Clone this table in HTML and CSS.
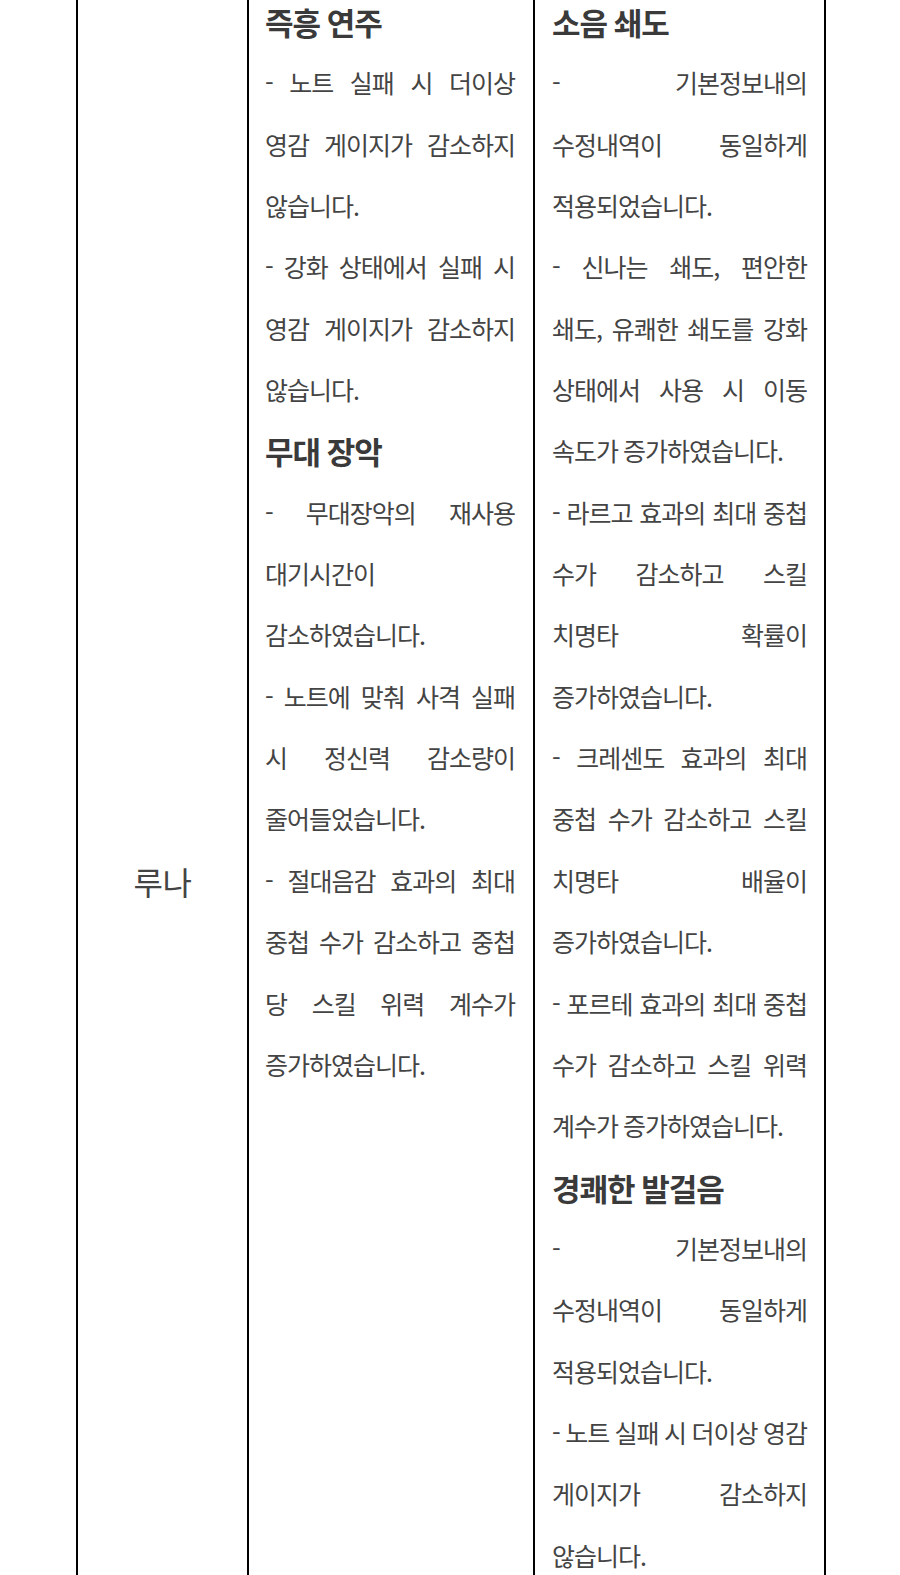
FILE: index.html
```html
<!DOCTYPE html>
<html lang="ko">
<head>
<meta charset="utf-8">
<title>루나</title>
<link rel="stylesheet" href="styles.css">
</head>
<body>
<table class="patch">
  <colgroup>
    <col class="c-name">
    <col class="c-a">
    <col class="c-b">
  </colgroup>
  <tbody>
    <tr>
      <td class="name">루나</td>
      <td class="notes notes-a">
        <p class="skill">즉흥 연주</p>
        <p>- 노트 실패 시 더이상 영감 게이지가 감소하지 않습니다.</p>
        <p>- 강화 상태에서 실패 시 영감 게이지가 감소하지 않습니다.</p>
        <p class="skill">무대 장악</p>
        <p>- 무대장악의 재사용 대기시간이 감소하였습니다.</p>
        <p>- 노트에 맞춰 사격 실패 시 정신력 감소량이 줄어들었습니다.</p>
        <p>- 절대음감 효과의 최대 중첩 수가 감소하고 중첩 당 스킬 위력 계수가 증가하였습니다.</p>
      </td>
      <td class="notes notes-b">
        <p class="skill">소음 쇄도</p>
        <p>- 기본정보내의 수정내역이 동일하게 적용되었습니다.</p>
        <p>- 신나는 쇄도, 편안한 쇄도, 유쾌한 쇄도를 강화 상태에서 사용 시 이동 속도가 증가하였습니다.</p>
        <p>- 라르고 효과의 최대 중첩 수가 감소하고 스킬 치명타 확률이 증가하였습니다.</p>
        <p>- 크레센도 효과의 최대 중첩 수가 감소하고 스킬 치명타 배율이 증가하였습니다.</p>
        <p>- 포르테 효과의 최대 중첩 수가 감소하고 스킬 위력 계수가 증가하였습니다.</p>
        <p class="skill">경쾌한 발걸음</p>
        <p>- 기본정보내의 수정내역이 동일하게 적용되었습니다.</p>
        <p>- 노트 실패 시 더이상 영감 게이지가 감소하지 않습니다.</p>
        <p>- 강화 상태에서 실패 시 영감 게이지가 감소하지 않습니다.</p>
      </td>
    </tr>
  </tbody>
</table>
</body>
</html>
```
FILE: styles.css
```css
html, body {
  margin: 0;
  padding: 0;
  background: #ffffff;
}

body {
  font-family: "Noto Sans CJK KR", "Noto Sans", sans-serif;
  color: #444444;
}

.patch {
  width: 750px;
  margin: -11px auto 0 76px;
  border-collapse: collapse;
  table-layout: fixed;
  border: 2px solid #000000;
}

.c-name { width: 171px; }
.c-a { width: 286px; }
.c-b { width: 291px; }

.patch td {
  border: 2px solid #000000;
  vertical-align: top;
}

.patch td.name {
  vertical-align: middle;
  text-align: center;
  font-size: 32px;
  letter-spacing: -0.5px;
  padding: 0;
}

.notes-a {
  padding: 0 18px 2px 16px;
}

.notes-b {
  padding: 0 17px 2px 17px;
}

.notes p {
  margin: 0;
  font-size: 25px;
  line-height: 61.35px;
  letter-spacing: -1px;
  word-spacing: -1px;
  text-align: justify;
  word-break: keep-all;
}

.notes p.skill {
  font-size: 31px;
  font-weight: 700;
  letter-spacing: -1px;
  word-spacing: -1px;
  color: #3a3a3a;
  text-align: left;
}
```
